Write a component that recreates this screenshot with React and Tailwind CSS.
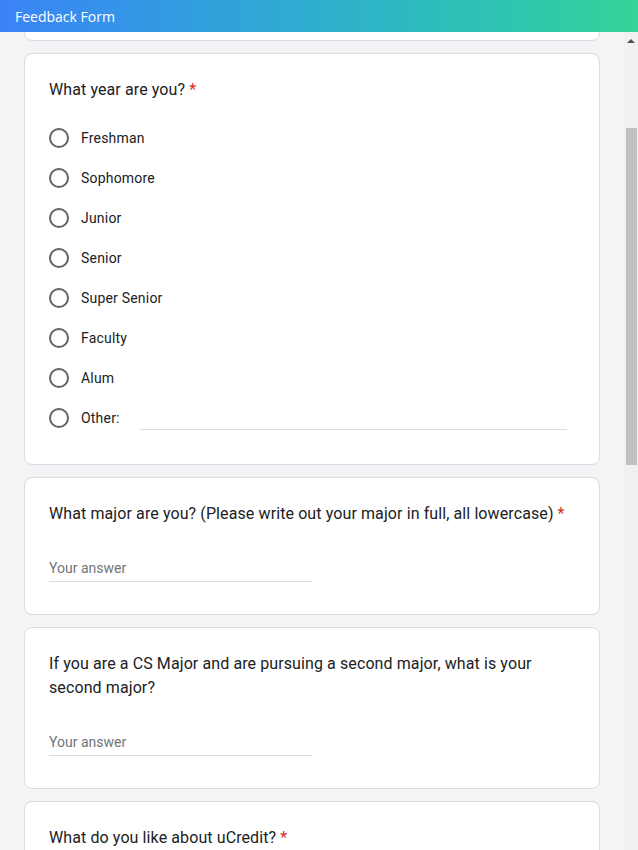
import React from 'react';

const years = ['Freshman', 'Sophomore', 'Junior', 'Senior', 'Super Senior', 'Faculty', 'Alum'];

const Question = ({ children }) => (
  <div className="text-[16px] leading-6 text-[#202124] tracking-[0.1px]">
    {children}
    <span className="text-[#d93025] ml-1">*</span>
  </div>
);

const Radio = () => (
  <div className="w-5 h-5 rounded-full border-2 border-[#5f6368] shrink-0" />
);

const TextAnswer = () => (
  <div className="mt-8 w-1/2 border-b border-[#dadce0] pb-[3px] text-[14px] leading-5 text-[#70757a]">
    Your answer
  </div>
);

const Card = ({ children, className = '' }) => (
  <div className={`bg-white border border-[#dadce0] rounded-lg px-6 ${className}`}>{children}</div>
);

const App = () => {
  return (
    <div className="h-[850px] flex flex-col overflow-hidden bg-[#f3f4f6]" style={{ fontFamily: 'Roboto, "Liberation Sans", sans-serif' }}>
      <header
        className="h-8 shrink-0 flex items-center px-[15px] bg-gradient-to-r from-[#3b82f6] to-[#34d399] text-white text-[14px]"
        style={{ fontFamily: '"Open Sans", sans-serif' }}
      >
        Feedback Form
      </header>

      <div className="flex flex-1 min-h-0">
        <main className="flex-1 overflow-hidden px-6 flex flex-col gap-3">
          <div className="h-[60px] -mt-[51px] shrink-0 bg-white border border-[#dadce0] rounded-lg" />

          <Card className="pt-6 pb-[26px] shrink-0">
            <Question>What year are you?</Question>
            <div className="mt-4 flex flex-col">
              {years.map((y) => (
                <label key={y} className="h-10 flex items-center gap-3 text-[14px] text-[#202124] tracking-[0.2px]">
                  <Radio />
                  <span>{y}</span>
                </label>
              ))}
              <label className="h-10 flex items-center gap-3 text-[14px] text-[#202124] tracking-[0.2px]">
                <Radio />
                <span>Other:</span>
                <div className="flex-1 ml-2 mr-2 mt-[22px] border-b border-[#dadce0]" />
              </label>
            </div>
          </Card>

          <Card className="pt-6 pb-8 shrink-0">
            <Question>What major are you? (Please write out your major in full, all lowercase)</Question>
            <TextAnswer />
          </Card>

          <Card className="pt-6 pb-8 shrink-0">
            <div className="text-[16px] leading-6 text-[#202124] tracking-[0.1px]">
              If you are a CS Major and are pursuing a second major, what is your second major?
            </div>
            <TextAnswer />
          </Card>

          <Card className="pt-6 pb-6 shrink-0">
            <Question>What do you like about uCredit?</Question>
            <TextAnswer />
          </Card>
        </main>

        <div className="w-[14px] shrink-0 bg-[#f1f1f1] flex flex-col">
          <div className="h-[17px] flex items-center justify-center">
            <div className="w-0 h-0 border-l-[4px] border-r-[4px] border-b-[4px] border-l-transparent border-r-transparent border-b-[#505050]" />
          </div>
          <div className="h-[79px]" />
          <div className="h-[337px] ml-[2px] mr-[1px] bg-[#c1c1c1]" />
        </div>
      </div>
    </div>
  );
};

export default App;
